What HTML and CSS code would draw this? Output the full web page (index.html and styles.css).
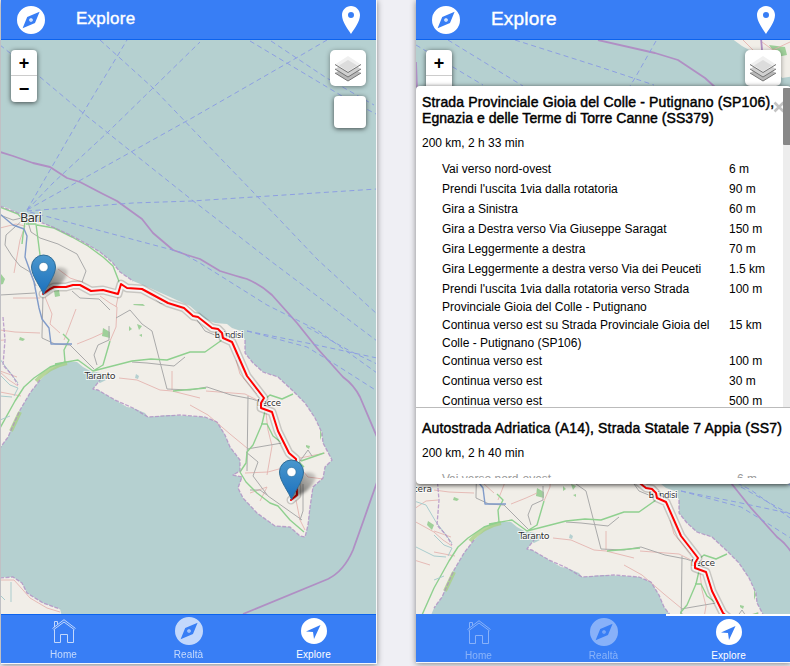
FILE: index.html
```html
<!DOCTYPE html>
<html lang="it">
<head>
<meta charset="utf-8">
<title>Explore</title>
<link rel="stylesheet" href="styles.css">
</head>
<body>
<svg class="defs" width="0" height="0" aria-hidden="true">
  <defs>
    <linearGradient id="pin-fill" x2="0" y2="1"><stop offset="0" stop-color="#4a97cd"/><stop offset="1" stop-color="#1b70bd"/></linearGradient>
    <linearGradient id="shade" x1="0" y1="1" x2="1" y2="0"><stop offset="0" stop-color="#000" stop-opacity=".65"/><stop offset="1" stop-color="#000" stop-opacity=".12"/></linearGradient>
    <filter id="soft" x="-30%" y="-30%" width="160%" height="160%"><feGaussianBlur stdDeviation="1.8"/></filter>
    <g id="pin">
      <path d="M0 0 L7 -24 Q18 -31 24 -25 Q25 -18 15 -9 Z" fill="url(#shade)" filter="url(#soft)"/>
      <path d="M0 -.5 C-2.500 -8 -12 -19 -12 -28 A12 12 0 0 1 12 -28 C12 -19 2.500 -8 0 -.5Z" fill="url(#pin-fill)" stroke="#2e6c97" stroke-width="1"/>
      <circle cy="-28" r="4.600" fill="#fff" stroke="#2e6c97" stroke-width=".6"/>
    </g>
    <g id="layers">
      <path d="M1 18 L14 26 L27 18 L14 10Z" fill="#b8b8b8"/><path d="M1 18 L14 26 L27 18" fill="none" stroke="#747474"/>
      <path d="M1 14 L14 22 L27 14 L14 6Z" fill="#d0d0d0"/><path d="M1 14 L14 22 L27 14" fill="none" stroke="#747474"/>
      <path d="M1 9.500 L14 17.500 L27 9.500 L14 1Z" fill="#f0f0f0"/><path d="M5 10.500 L14 5 L23 10.500 L14 16.500Z" fill="#dcdcdc"/><path d="M1 9.500 L14 17.500 L27 9.500" fill="none" stroke="#747474"/>
    </g>
    <g id="compass">
      <path fill-rule="evenodd" d="M14 0 A14 14 0 1 1 14 28 A14 14 0 1 1 14 0Z M22.600 5.700 L10.200 10.900 L5.600 22.200 L18 17Z" fill="currentColor"/>
      <circle cx="14" cy="14" r="1.800" fill="currentColor"/><circle cx="14" cy="14" r=".6" fill="#387ef5"/>
    </g>
    <path id="place" fill="currentColor" fill-rule="evenodd" d="M9 0 C14 0 18 4 18 9 C18 16 12 23 9 28 C6 23 0 16 0 9 C0 4 4 0 9 0Z M9 6 A3 3 0 1 0 9 12 A3 3 0 1 0 9 6Z"/>
    <g id="home" fill="none" stroke="currentColor" stroke-width="1">
      <path d="M.5 9.500 L12 .7 L23.500 9.500 M1.500 10.800 L12 3 L22.500 10.800 M2.500 8 V2.500 H5.500 V5.500 M2.500 10.500 V23.500 H8.500 V15.500 H15.500 V23.500 H21.500 V10.500"/>
    </g>
    <path id="nav" fill="currentColor" fill-rule="evenodd" d="M13 0 A13 13 0 1 1 13 26 A13 13 0 1 1 13 0Z M19.500 7 L5 13.400 L12 14 L13 21Z"/>

    <g id="map">
      <rect x="-20" y="-122" width="400" height="740" fill="#b5d0d0"/>
      <path class="land" d="M-20 199 L-10 203 L0 206 L8 208 L18 213 L26 217 L40 222 L55 228 L70 235 L85 243 L100 252 L112 262 L120 272 L133 281 L150 288 L170 297 L190 306 L205 319 L215 323 L227 324 L232 328 L241 331 L245 340 L245 353 L253 363 L263 372 L278 377 L292 390 L305 403 L315 418 L322 433 L323 443 L332 460 L325 467 L323 478 L313 487 L310 507 L308 525 L305 537 L300 536 L290 527 L275 526 L257 513 L243 498 L238 488 L242 477 L233 475 L240 471 L240 460 L230 447 L225 435 L217 422 L205 417 L190 416 L170 415 L148 417 L145 413 L133 408 L127 407 L115 400 L98 390 L93 389 L100 380 L98 373 L92 372 L83 367 L77 362 L63 362 L50 370 L40 380 L30 393 L20 410 L15 420 L8 437 L0 448 L-5 460 L-30 470Z"/>
      <path class="land" d="M-10 578 L13 577 L22 583 L27 593 L43 603 L60 609 L63 620 H-20Z"/>
      <path class="land" d="M297 -122 L308 -114 L319 -108 L339 -96 L348 -82 L362 -84 V-122Z"/>
      <path fill="#9fd09a" d="M335 -115 l16 2 2 8 -10 2Z M1 274 l4 5 -2 5 -5 1Z M54 291 l5 -1 1 6 -5 1Z M103 328 l7 4 0 6 -8 -2Z M20 337 l5 2 -2 2 -4 -1Z M129 326 l3 3 -3 2Z M137 324 l5 2 -3 4Z M134 304 h9 l2 2 -12 -1Z M139 335 l3 -1 0 3Z M-6 361 l6 4 -2 5 -5 -5Z M320 429 l2 6 -2 5Z M306 445 l4 1 -1 3 -3 -2Z"/>
      <path fill="none" stroke="#a9cf86" stroke-width="4" opacity=".8" d="M36 381 Q50 366 67 363 M11 431 L20 412"/>
      <path fill="#b5d0d0" d="M96 372 l8 2 2 6 -6 3 -7 -4Z M136 374 l3 2 -1 3 -3 -1Z"/>
      <path class="road pink" d="M0 228 L16 224 L25 226 L20 240 L14 273 M13 298 H40 M0 330 L15 332 L40 333 M45 297 L52 314 L50 324 L60 333 M76 309 L68 330 L64 340 M77 344 L92 338 L103 333 M58 269 L70 278 L82 282 L92 291 M100 296 L110 303 L117 307 L116 327 L110 341 M119 378 L137 380 L160 390 L172 391 L200 398 M172 371 V390 M0 371 L17 377 M0 392 L21 396 M116 307 L119 292 M190 405 L208 415 L230 434 L247 448 M206 391 L245 394 L261 402 M266 413 L268 430 L272 446 L267 475 M245 473 L268 472 L297 464 L308 477 L323 479 M296 500 L300 520 L305 530 M236 360 L240 374 L257 394 M250 493 L267 487 L260 501 M0 580 H14 L23 590 L30 598 L47 608 L60 612 M300 458 L325 453 M-20 349 L-8 341 L4 340 M-20 361 L0 372 L9 380 L18 386 M-20 400 L-4 405 M309 -120 L317 -112 L323 -106 M328 -118 L339 -110 L356 -118"/>
      <path class="road gray" d="M0 215 L13 220 L26 217 M25 218 L6 235 L5 245 L12 256 L20 266 L30 272 L36 286 M0 295 L35 293 M28 222 L31 232 L40 238 L58 244 L77 254 L86 271 L82 282 M72 291 L80 298 L99 299 L110 310 M43 295 L42 335 L42 338 L55 344 L70 345 L94 369 M116 318 L130 310 L142 324 L152 331 L160 362 L167 389 L190 390 L207 387 L231 395 L252 399 L264 403 M109 326 L109 340 L98 345 L94 355 L97 365 M132 362 L147 363 L174 366 L185 357 M143 289 L160 303 L180 308 L195 317 L205 331 L222 338 M234 344 L236 356 L244 371 L263 395 M248 396 L247 471 M247 449 L282 443 M246 452 L258 462 L253 476 L268 496 L302 520 M300 461 L308 450 L312 456 M303 484 L303 511 L300 520 M250 490 L260 490 L267 495"/>
      <path class="road green" d="M0 207 L18 214 L25 222 L23 235 L22 244 M26 224 H36 L40 255 M37 225 L54 228 L72 237 L88 246 L103 257 L113 266 L120 284 M42 297 L48 291 M63 334 L69 340 L64 350 L65 362 L50 367 L34 378 L24 387 L15 401 L0 428 L-12 455 M55 364 L78 360 L93 371 L103 365 L110 341 M93 371 L132 361 L151 359 L167 360 L190 352 L205 352 L222 340 M173 391 L206 388 M261 402 L270 395 L282 399 L293 394 M265 411 L262 424 L253 445 L247 452 L246 463 L240 472 L246 482 L257 493 L270 503 L278 506 L290 520 L304 532 M261 424 L267 424 L273 436 L282 443 M297 460 L304 467 M301 461 L324 453"/>
      <path class="road blue" d="M0 214 L13 225 L24 229 L27 236 L25 257 L34 282 L39 308 L42 319 L49 328 L51 344 H72"/>
      <path class="road water" d="M0 375 L10 385 L18 388 L14 396 M10 416 L0 420 M0 595 L5 600 M11 582 V602 M-20 341 L-8 345 L2 362 L18 383 M-20 386 L0 396 L12 397"/>
      <path class="border dash" d="M0 206 L18 213 L40 222 L55 228 L70 235 L85 243 L100 252 L112 262 L120 272 L133 281 M245 340 L245 353 L253 363 L263 372 L278 377 L292 390 L305 403 L315 418 L322 433 L323 443 L332 460 L325 467 L323 478 L313 487 L310 507 L308 525 L305 537 L300 536 L290 527 L275 526 L257 513 L243 498 L238 488 L242 477 L233 475 L240 471 L240 460 L230 447 L225 435 L217 422 L205 417 L180 415 L148 417 L133 408 L115 400 L98 390 L93 389 L100 380 M40 380 L30 393 L20 410 L8 437 L0 448 M3 317 L5 340 L3 365 L12 375 L18 385 M0 578 L13 577 L22 583 L27 593 L43 603 L60 609"/>
      <path class="border" d="M-10 149 L0 152 L13 156 L33 163 L50 167 L67 178 L80 182 L103 194 L117 201 L142 219 L153 233 L173 250 L187 255 L200 259 L220 271 Q236 276 247 279 Q261 285 272 295 L297 323 L317 348 L343 377 Q354 385 360 397 L377 437 M377 482 L363 522 L353 550 Q344 571 328 579 L243 614 M164 -120 L221 -107 L244 -100 L271 -82 L282 -72 M-18 -98 L-17 -72 M327 -122 L328 -110"/>
      <path class="ferry" d="M27 210 L83 113 L127 40 M27 210 L53 183 L108 132 L200 42 M27 210 L131 152 L192 118 L298 57 L327 40 M27 211 L133 203 L192 201 L377 189 M0 45 L40 77 L83 113 L133 153 L192 200 L218 220 L272 262 L377 341 M100 40 L153 88 L200 137 L280 220 L318 260 L377 314 M250 41 L347 99 L376 114 M271 41 L325 77 L374 105 M30 212 L180 252 L200 263 L267 305 L317 330 L377 373 M247 331 L307 343 L377 358 M247 331 L307 347 L333 363 L377 391 M307 327 L350 351 L377 364 M-18 -115 L49 -75 M14 -120 L89 -74 M81 -120 L166 -93 L220 -75 M222 -119 L201 -82 L196 -74"/>
      <g class="labels">
        <text x="20" y="222" font-size="12.500" textLength="22">Bari</text>
        <text x="84.500" y="379" font-size="9.500" textLength="31">Taranto</text>
        <text x="214.500" y="338" font-size="9" textLength="29">Brindisi</text>
        <text x="257" y="406" font-size="9" textLength="24">Lecce</text>
        <text x="-33" y="332" font-size="9" textLength="31">Matera</text>
      </g>
      <g fill="none" stroke-linejoin="round" stroke-linecap="round">
        <path stroke="#000" stroke-opacity=".17" stroke-width="9" d="M43 294 L50 289 L54 287 L66 287 L73 285 L80 285 L91 291 L103 290 L118 294 L121 284 L127 288 L142 289 L168 303 L184 308 L193 316 L198 317 L212 328 L218 329 L222 333 L223 338 L232 342 L247 376 L264 398 L261 403 L261 408 L272 412 L278 431 L289 453 L296 459 L297 495 L291 500"/>
        <path stroke="#fff" stroke-opacity=".8" stroke-width="6" d="M43 294 L50 289 L54 287 L66 287 L73 285 L80 285 L91 291 L103 290 L118 294 L121 284 L127 288 L142 289 L168 303 L184 308 L193 316 L198 317 L212 328 L218 329 L222 333 L223 338 L232 342 L247 376 L264 398 L261 403 L261 408 L272 412 L278 431 L289 453 L296 459 L297 495 L291 500"/>
        <path stroke="#f00" stroke-width="2" d="M43 294 L50 289 L54 287 L66 287 L73 285 L80 285 L91 291 L103 290 L118 294 L121 284 L127 288 L142 289 L168 303 L184 308 L193 316 L198 317 L212 328 L218 329 L222 333 L223 338 L232 342 L247 376 L264 398 L261 403 L261 408 L272 412 L278 431 L289 453 L296 459 L297 495 L291 500"/>
      </g>
      <use href="#pin" x="43.500" y="295"/>
      <use href="#pin" x="291.500" y="500"/>
    </g>
  </defs>
</svg>

<section class="phone first">
  <header class="bar">
    <svg class="bar-compass" width="28" height="28"><use href="#compass"/></svg>
    <h1>Explore</h1>
    <svg class="bar-place" width="18" height="28"><use href="#place"/></svg>
  </header>
  <main class="view">
    <svg class="map" width="375" height="574" viewBox="1 40 375 574"><use href="#map"/></svg>
    <div class="zoom"><span>+</span><span>−</span></div>
    <div class="controls">
      <div class="control layers"><svg width="28" height="28"><use href="#layers"/></svg></div>
      <div class="control blank"></div>
    </div>
  </main>
  <nav class="tabs">
    <a class="tab"><svg width="24" height="24"><use href="#home"/></svg><span>Home</span></a>
    <a class="tab"><svg width="28" height="28"><use href="#compass"/></svg><span>Realtà</span></a>
    <a class="tab active"><svg width="26" height="26"><use href="#nav"/></svg><span>Explore</span></a>
  </nav>
</section>

<section class="phone second">
  <header class="bar">
    <svg class="bar-compass" width="28" height="28"><use href="#compass"/></svg>
    <h1>Explore</h1>
    <svg class="bar-place" width="18" height="28"><use href="#place"/></svg>
  </header>
  <main class="view">
    <svg class="map" width="374" height="574" viewBox="-18 -120 374 574"><use href="#map"/></svg>
    <div class="zoom"><span>+</span></div>
    <div class="controls">
      <div class="control layers"><svg width="28" height="28"><use href="#layers"/></svg></div>
    </div>
    <div class="directions">
      <div class="alternative">
        <h2><span class="line-a">Strada Provinciale Gioia del Colle - Putignano (SP106),</span><br><span class="line-b">Egnazia e delle Terme di Torre Canne (SS379)</span></h2>
        <h3>200 km, 2 h 33 min</h3>
        <ul>
          <li><span>Vai verso nord-ovest</span><span>6 m</span></li>
          <li><span>Prendi l'uscita 1via dalla rotatoria</span><span>90 m</span></li>
          <li><span>Gira a Sinistra</span><span>60 m</span></li>
          <li><span>Gira a Destra verso Via Giuseppe Saragat</span><span>150 m</span></li>
          <li><span>Gira Leggermente a destra</span><span>70 m</span></li>
          <li><span>Gira Leggermente a destra verso Via dei Peuceti</span><span>1.5 km</span></li>
          <li class="double"><span>Prendi l'uscita 1via dalla rotatoria verso Strada<br>Provinciale Gioia del Colle - Putignano</span><span>100 m</span></li>
          <li class="double"><span>Continua verso est su Strada Provinciale Gioia del<br>Colle - Putignano (SP106)</span><span>15 km</span></li>
          <li><span>Continua verso est</span><span>100 m</span></li>
          <li><span>Continua verso est</span><span>30 m</span></li>
          <li><span>Continua verso est</span><span>500 m</span></li>
        </ul>
        <svg class="close" width="12" height="12"><path d="M1.500 1.500 L10.500 10.500 M10.500 1.500 L1.500 10.500"/></svg>
        <div class="scroll"><div class="thumb"></div></div>
      </div>
      <div class="alternative minimized">
        <h2><span class="line-c">Autostrada Adriatica (A14), Strada Statale 7 Appia (SS7)</span></h2>
        <h3>200 km, 2 h 40 min</h3>
        <ul><li><span>Vai verso nord-ovest</span><span>6 m</span></li></ul>
      </div>
    </div>
  </main>
  <nav class="tabs">
    <a class="tab"><svg width="24" height="24"><use href="#home"/></svg><span>Home</span></a>
    <a class="tab"><svg width="28" height="28"><use href="#compass"/></svg><span>Realtà</span></a>
    <a class="tab active"><svg width="26" height="26"><use href="#nav"/></svg><span>Explore</span></a>
  </nav>
</section>
</body>
</html>
```
FILE: styles.css
```css
* { box-sizing: border-box; }
body {
  margin: 0;
  width: 790px;
  height: 666px;
  overflow: hidden;
  display: flex;
  background: #efeff4;
  font-family: "Liberation Sans", Arial, sans-serif;
  color: #000;
}
.defs { position: absolute; }
.phone { flex: none; height: 664px; background: #f7f7f9; box-shadow: 0 1px 6px rgba(0,0,0,.45); }
.first { width: 376px; margin-left: 1px; padding-right: 1px; }
.second { width: 375px; margin-left: 39px; height: 663px; }
.bar {
  height: 40px;
  display: flex;
  align-items: flex-start;
  padding: 6px 16px 0;
  background: #387ef5;
  border-bottom: 1px solid #0c63ee;
  color: #fff;
}
.bar h1 {
  flex: 1;
  margin: 3px 0 0 31px;
  font-size: 17px;
  line-height: 20px;
  font-weight: 400;
  letter-spacing: .25px;
  -webkit-text-stroke: .4px #fff;
}
.second .bar h1 { font-size: 19px; letter-spacing: .2px; }
.view { position: relative; height: 574px; overflow: hidden; }
.map { display: block; }

.land { fill: #f1eee8; }
.road { fill: none; stroke-width: 1; stroke-linejoin: round; }
.pink { stroke: #e4b4b0; stroke-width: .9; }
.gray { stroke: #aaa; }
.green { stroke: #8fd08f; stroke-width: 1.4; }
.blue { stroke: #809bc9; stroke-width: 1.4; }
.water { stroke: #a9cccd; }
.border { fill: none; stroke: #b08fc4; stroke-width: 1.8; stroke-linejoin: round; }
.dash { stroke-width: 1.3; stroke-dasharray: 4 1.5; opacity: .8; }
.ferry { fill: none; stroke: #8d9fe2; stroke-width: 1; stroke-dasharray: 5 3.5; }
.labels { font-family: "DejaVu Sans", sans-serif; fill: #333; stroke: #fff; stroke-opacity: .75; stroke-width: 2px; paint-order: stroke; }

.zoom {
  position: absolute;
  left: 10px;
  top: 10px;
  width: 26px;
  height: 52px;
  border-radius: 4px;
  background: #fff;
  box-shadow: 0 1px 5px rgba(0,0,0,.65);
  font-size: 18px;
  font-weight: 700;
  line-height: 26px;
  text-align: center;
}
.zoom span { display: block; height: 26px; }
.zoom span:first-child { border-bottom: 1px solid #ccc; }
.controls {
  position: absolute;
  right: 10px;
  top: 10px;
  display: flex;
  flex-direction: column;
  align-items: flex-end;
  gap: 10px;
}
.control { background: #fff; border-radius: 5px; box-shadow: 0 1px 5px rgba(0,0,0,.4); }
.layers { width: 36px; height: 36px; padding: 5px 4px; }
.layers svg { display: block; }
.blank { width: 32px; height: 32px; border-radius: 4px; box-shadow: 0 1px 5px rgba(0,0,0,.65); }

.directions {
  position: absolute;
  left: 0;
  top: 46px;
  width: 375px;
  height: 398px;
  overflow: hidden;
  border-radius: 4px;
  background: #fff;
  box-shadow: 0 1px 5px rgba(0,0,0,.75);
}
.alternative {
  position: relative;
  height: 322px;
  padding: 8px 0 0 6px;
  overflow: hidden;
  border-bottom: 1px solid #bbb;
}
h2 { margin: 0; font-size: 14px; line-height: 16px; font-weight: 400; white-space: nowrap; -webkit-text-stroke: .45px #000; }
.line-a { letter-spacing: .165px; }
.line-b { letter-spacing: .06px; }
.line-c { letter-spacing: .175px; }
h3 { margin: 10px 0 0; font-size: 12px; line-height: 14px; font-weight: 400; }
ul { list-style: none; margin: 10px 0 0 20px; padding: 0; font-size: 12px; line-height: 18px; }
li { height: 20px; display: grid; grid-template-columns: 287px 1fr; white-space: nowrap; }
.double { height: 36px; }
.close { position: absolute; left: 357px; top: 15px; fill: none; stroke: #c3c3c3; stroke-width: 2.6; }
.scroll { position: absolute; right: 0; top: 2px; width: 8px; height: 319px; background: #ededed; }
.thumb { height: 57px; background: #888; border-radius: 1px; }
.minimized { height: 70px; padding-top: 12px; border: 0; }
.minimized ul { color: #999; }
.minimized li { grid-template-columns: 295px 1fr; }

.tabs {
  height: 49px;
  display: flex;
  background: #387ef5;
  border-top: 1px solid #0c63ee;
  color: #fff;
}
.tab {
  flex: 1;
  opacity: .7;
  display: flex;
  flex-direction: column;
  align-items: center;
  justify-content: space-between;
  padding: 2px 0 2px;
  font-size: 10px;
  line-height: 12px;
  letter-spacing: .1px;
}
.tab:first-child { padding-top: 4px; }
.tab.active { opacity: 1; padding-top: 3px; }
.second .tabs { height: 48px; border-top: 0; }
.second .tab { opacity: .4; padding: 4px 0 0; }
.second .tab:first-child { padding-top: 6px; }
.second .tab.active { opacity: 1; border-top: 2px solid #fff; padding-top: 3px; }
```
